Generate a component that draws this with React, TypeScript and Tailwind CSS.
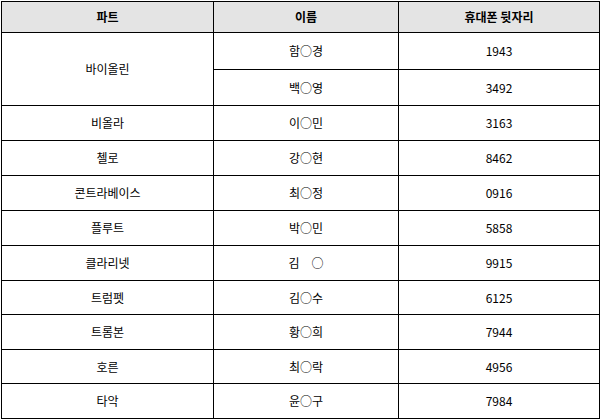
import React from "react";

const rows: [string, string, string][] = [
  ["비올라", "이○민", "3163"],
  ["첼로", "강○현", "8462"],
  ["콘트라베이스", "최○정", "0916"],
  ["플루트", "박○민", "5858"],
  ["클라리넷", "김\u3000○", "9915"],
  ["트럼펫", "김○수", "6125"],
  ["트롬본", "황○희", "7944"],
  ["호른", "최○락", "4956"],
  ["타악", "윤○구", "7984"],
];

export default function App() {
  const cell = "bg-white flex items-center justify-center";
  return (
    <div className="w-[601px] h-[420px] bg-white pt-px pl-px">
      <div
        className="grid gap-px bg-black border border-black w-[599px] text-[12px] text-black leading-none"
        style={{
          fontFamily: '"Noto Sans CJK KR", "Noto Sans", sans-serif',
        }}
      >
        <div className="grid grid-cols-[211px_184px_200px] gap-px">
          <div className="bg-[#e4e4e4] h-[30px] flex items-center justify-center font-bold">파트</div>
          <div className="bg-[#e4e4e4] h-[30px] flex items-center justify-center font-bold">이름</div>
          <div className="bg-[#e4e4e4] h-[30px] flex items-center justify-center font-bold">휴대폰 뒷자리</div>
        </div>
        <div className="grid grid-cols-[211px_184px_200px] grid-rows-[36px_35px] gap-px">
          <div className={`${cell} row-span-2`}>바이올린</div>
          <div className={cell}>함○경</div>
          <div className={cell}>1943</div>
          <div className={cell}>백○영</div>
          <div className={cell}>3492</div>
        </div>
        {rows.map(([a, b, c], i) => (
          <div
            key={i}
            className={`grid grid-cols-[211px_184px_200px] gap-px ${
              i === 5 || i === 7 ? "h-[33px]" : "h-[34px]"
            }`}
          >
            <div className={cell}>{a}</div>
            <div className={cell}>{b}</div>
            <div className={cell}>{c}</div>
          </div>
        ))}
      </div>
    </div>
  );
}
